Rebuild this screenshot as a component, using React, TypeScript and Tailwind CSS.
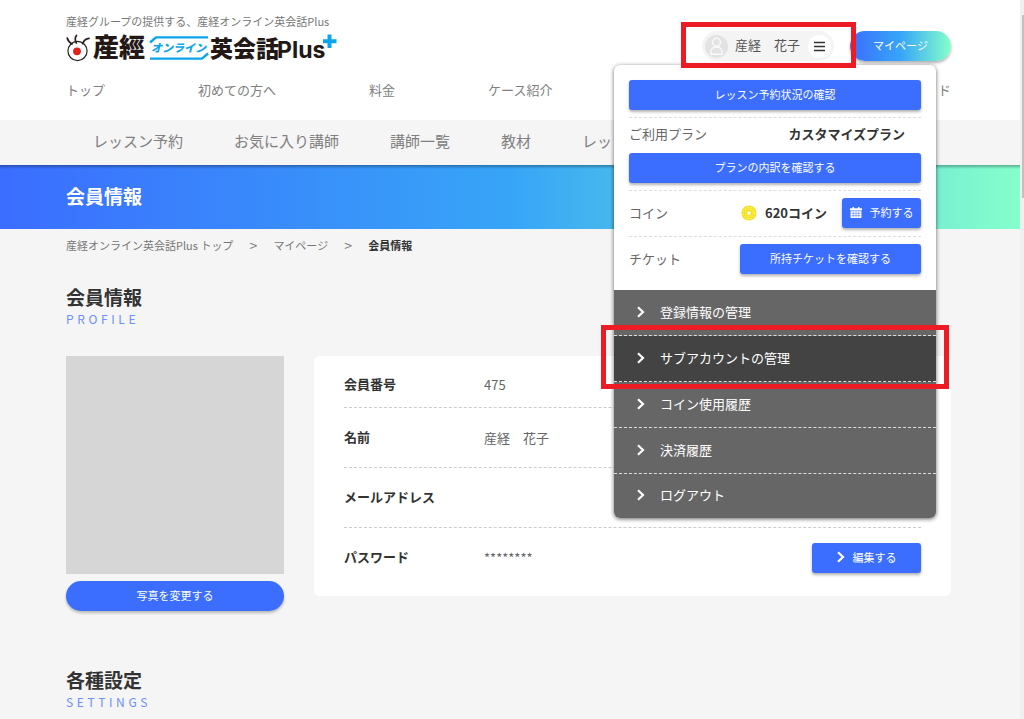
import React from "react";

const mainNav = ["トップ", "初めての方へ", "料金", "ケース紹介"];
const subNav = ["レッスン予約", "お気に入り講師", "講師一覧", "教材", "レッ"];
const menuItems = [
  { label: "登録情報の管理" },
  { label: "サブアカウントの管理", active: true },
  { label: "コイン使用履歴" },
  { label: "決済履歴" },
  { label: "ログアウト" },
];

function Chevron() {
  return (
    <svg className="h-3 w-2 shrink-0" viewBox="0 0 8 12" fill="none" stroke="currentColor" strokeWidth="2.2" aria-hidden="true">
      <path d="M1 1.2 6 6 1 10.8" />
    </svg>
  );
}

function Logo() {
  return (
    <svg
      className="block h-8 w-[272px] overflow-visible font-['Noto_Sans_CJK_JP',sans-serif]"
      viewBox="0 0 272 32"
      role="img"
      aria-label="産經オンライン英会話Plus"
    >
      <g fill="none" stroke="#2a2020" strokeLinecap="round">
        <circle cx="11.5" cy="18" r="9.6" fill="#fff" strokeWidth="1.2" />
        <path d="M1.200 5C1.800 7.800 3.600 9.400 6 11M10.500 2.500C8.800 4.600 9 7.400 10.400 10M23 5.400C20.400 5.600 18 7.400 16.600 10.600" strokeWidth="1.700" />
      </g>
      <circle cx="11" cy="18.300" r="3.900" fill="#e0241c" />
      <text x="27" y="24" fontSize="26" fontWeight="900" fill="#231815">産經</text>
      <g fill="none" stroke="#0ba5ea" strokeWidth="2.4">
        <path d="M84 9.500 90 4.400H142M84 25.600H136L142 20.500" />
      </g>
      <text x="85" y="19" fontSize="11" fontWeight="900" fontStyle="italic" fill="#0ba5ea">オンライン</text>
      <text x="144" y="24" fontSize="23" fontWeight="900" fill="#231815">英会話</text>
      <text x="211" y="25" fontSize="23" fontWeight="700" fill="#231815" className="font-['Inter',sans-serif]">Plus</text>
      <path d="M263.500 1.500V15M257 8.200H270.500" stroke="#0ba5ea" strokeWidth="4" />
    </svg>
  );
}

function Coin() {
  return (
    <svg className="size-4" viewBox="0 0 16 16" aria-hidden="true">
      <circle cx="8" cy="8" r="7.600" fill="#f5e11c" />
      <circle cx="8" cy="8" r="5.800" fill="none" stroke="#fff9a8" strokeWidth="0.900" strokeDasharray="1.600 1.500" />
      <circle cx="8" cy="8" r="4" fill="#f3dc10" stroke="#fff37a" strokeWidth="0.600" />
      <path d="m8 5.300.8 1.700 1.900.2-1.400 1.300.4 1.900L8 9.500l-1.700.9.4-1.900-1.400-1.300 1.900-.2z" fill="#fff" />
    </svg>
  );
}

function Calendar() {
  return (
    <svg className="h-[11px] w-3" viewBox="0 0 12 11" aria-hidden="true">
      <path d="M2.500 0h1.500v1.300h4V0h1.500v1.300H12V3.500H0V1.300h2.500zM.6 4.200h10.800V11H.6z" fill="#fff" />
      <path d="M1.600 6.300h8.800M1.600 8.600h8.800M3.300 5v5.200M6 5v5.200M8.700 5v5.200" stroke="#3b6dff" strokeWidth="0.500" />
    </svg>
  );
}

const blueButton =
  "flex h-[30px] items-center justify-center rounded-[3px] bg-[#3b6dff] pb-0.5 text-[11px] text-white shadow-[0_2px_3px_rgba(0,0,0,0.3)]";

function AccountMenu() {
  return (
    <div className="absolute top-[65px] right-[15px] z-10 w-[322px] rounded-md bg-white shadow-[0_1px_4px_rgba(0,0,0,0.6)]">
      <div className="px-[15px] pt-[15px] pb-4 text-[13px] text-[#666]">
        <div className="pb-[7px]">
          <button className={`${blueButton} w-full`}>レッスン予約状況の確認</button>
        </div>
        <div className="border-t border-dashed border-[#ddd] pb-[7px]">
          <div className="flex h-[35px] items-center justify-between pr-4 pb-1">
            <span>ご利用プラン</span>
            <strong className="text-[#333]">カスタマイズプラン</strong>
          </div>
          <button className={`${blueButton} w-full`}>プランの内訳を確認する</button>
        </div>
        <div className="flex items-center border-t border-dashed border-[#ddd] pt-[7px] pb-2">
          <span className="flex-1">コイン</span>
          <Coin />
          <strong className="mr-[15px] ml-2 text-[#333]">620コイン</strong>
          <button className={`${blueButton} w-[79px] gap-2`}>
            <Calendar />
            予約する
          </button>
        </div>
        <div className="flex items-center justify-between border-t border-dashed border-[#ddd] pt-[7px]">
          <span>チケット</span>
          <button className={`${blueButton} w-[181px]`}>所持チケットを確認する</button>
        </div>
      </div>
      <ul className="text-[13px] text-white">
        {menuItems.map((item) => (
          <li key={item.label} className="group relative">
            <a
              href="#"
              className={`flex h-[46px] items-center gap-[15px] border-b border-dashed border-[#ddd] pb-0.5 pl-[23px] group-last:h-11 group-last:rounded-b-md group-last:border-b-0 ${
                item.active ? "bg-[#434343]" : "bg-[#666]"
              }`}
            >
              <Chevron />
              {item.label}
            </a>
            {item.active && (
              <span className="pointer-events-none absolute -inset-x-[13px] -top-[11px] -bottom-[7px] z-20 border-5 border-[#ed1c24]" />
            )}
          </li>
        ))}
      </ul>
    </div>
  );
}

function Header() {
  return (
    <header className="relative h-[120px] bg-white">
      <div className="flex items-start justify-between">
        <div className="pt-[13px]">
          <p className="text-[11px] leading-4 text-[#777]">産経グループの提供する、産経オンライン英会話Plus</p>
          <a href="#" className="mt-1 block">
            <Logo />
          </a>
        </div>
        <div className="flex gap-4 pt-[31px]">
          <div className="relative">
            <button className="flex h-[30px] items-center rounded-full bg-[#f4f4f4] px-[3px] text-[13px] text-[#555]" aria-label="アカウントメニュー">
              <svg className="size-[23px]" viewBox="0 0 23 23" fill="none" stroke="#fafafa" strokeWidth="1.400" aria-hidden="true">
                <circle cx="11.500" cy="11.500" r="11.500" fill="#e3e3e3" stroke="none" />
                <circle cx="11.500" cy="7.300" r="4" />
                <path d="M6 19.300V16.500C6 14 8.300 12 11.500 12S17 14 17 16.500V19.300z" />
              </svg>
              <span className="mr-2 ml-[7px] pb-0.5">産経　花子</span>
              <span className="flex size-[23px] items-center justify-center rounded-full bg-white">
                <svg className="size-[11px]" viewBox="0 0 11 11" stroke="#333" strokeWidth="1.600" aria-hidden="true">
                  <path d="M0 1.500h11M0 5.500h11M0 9.500h11" />
                </svg>
              </span>
            </button>
            <span className="pointer-events-none absolute -top-[9px] -right-[22px] -bottom-[7px] -left-[21px] z-20 border-5 border-[#ed1c24]" />
          </div>
          <a
            href="#"
            className="flex h-[30px] w-[101px] items-center justify-center rounded-full bg-[linear-gradient(90deg,#3b6dff,#37a5f7_50%,#85ffcb)] pb-0.5 text-[11px] text-white shadow-[0_2px_3px_rgba(0,0,0,0.3)]"
          >
            マイページ
          </a>
        </div>
      </div>
      <nav className="mt-[15px] flex gap-[93px] text-[13px] leading-5 text-[#808080]">
        {mainNav.map((label) => (
          <a key={label} href="#">
            {label}
          </a>
        ))}
        <a href="#" className="ml-auto">
          ド
        </a>
      </nav>
      <AccountMenu />
    </header>
  );
}

function SectionHeading({ title, sub }: { title: string; sub: string }) {
  return (
    <div>
      <h2 className="text-[19px] leading-7 font-bold text-[#333]">{title}</h2>
      <p className="text-xs leading-4 tracking-[0.3em] text-[#6b8fff]">{sub}</p>
    </div>
  );
}

function Row({ label, tall = true, children }: { label: string; tall?: boolean; children?: React.ReactNode }) {
  return (
    <div
      className={`flex items-center border-b border-dashed border-[#ccc] text-[13px] last:border-b-0 ${tall ? "h-[60px]" : "h-[45px]"}`}
    >
      <dt className="w-[140px] pb-0.5 font-bold text-[#333]">{label}</dt>
      <dd className="flex flex-1 items-center justify-between text-[#666]">{children}</dd>
    </div>
  );
}

export default function App() {
  return (
    <div className="flex min-h-screen bg-[#f5f5f5] font-['Noto_Sans_CJK_JP',sans-serif]">
      <div className="min-w-0 flex-1">
        <div className="bg-white pr-[69px] pl-[66px]">
          <Header />
        </div>
        <nav className="flex h-[45px] items-center gap-[51px] pb-0.5 pl-[93px] text-[15px] text-[#808080]">
          {subNav.map((label) => (
            <a key={label} href="#">
              {label}
            </a>
          ))}
        </nav>
        <div className="flex h-16 items-center bg-[linear-gradient(rgba(0,0,0,0.3),transparent_4px),linear-gradient(90deg,#3b6dff,#37a5f7_50%,#85ffcb)] pb-0.5 pl-[66px]">
          <h1 className="text-[19px] font-bold text-white">会員情報</h1>
        </div>
        <main className="pr-[69px] pl-[66px]">
          <ol className="flex gap-[15px] pt-2 text-[11px] leading-4 text-[#777]">
            <li>
              <a href="#">産経オンライン英会話Plus トップ</a>
            </li>
            <li className="w-[10px] text-center text-sm leading-4">&gt;</li>
            <li>
              <a href="#">マイページ</a>
            </li>
            <li className="w-[10px] text-center text-sm leading-4">&gt;</li>
            <li className="font-bold text-[#333]">会員情報</li>
          </ol>
          <div className="pt-[30px]">
            <SectionHeading title="会員情報" sub="PROFILE" />
          </div>
          <div className="flex items-start gap-[30px] pt-[29px]">
            <div className="w-[218px]">
              <div className="aspect-square bg-[#d6d6d6]" />
              <button className="mt-[7px] flex h-[30px] w-full items-center justify-center rounded-full bg-[#3b6dff] pb-0.5 text-[11px] text-white shadow-[0_2px_3px_rgba(0,0,0,0.25)]">
                写真を変更する
              </button>
            </div>
            <dl className="flex-1 rounded-md bg-white px-[30px] pt-[7px] pb-2">
              <Row label="会員番号" tall={false}>
                475
              </Row>
              <Row label="名前">産経　花子</Row>
              <Row label="メールアドレス" />
              <Row label="パスワード">
                ********
                <button className={`${blueButton} w-[109px] gap-2`}>
                  <Chevron />
                  編集する
                </button>
              </Row>
            </dl>
          </div>
          <div className="pt-[55px]">
            <SectionHeading title="各種設定" sub="SETTINGS" />
          </div>
        </main>
      </div>
      <div className="w-1 bg-[#f0f0f0] pt-[15px] pl-0.5">
        <div className="h-[183px] bg-[#c1c1c1]" />
      </div>
    </div>
  );
}
